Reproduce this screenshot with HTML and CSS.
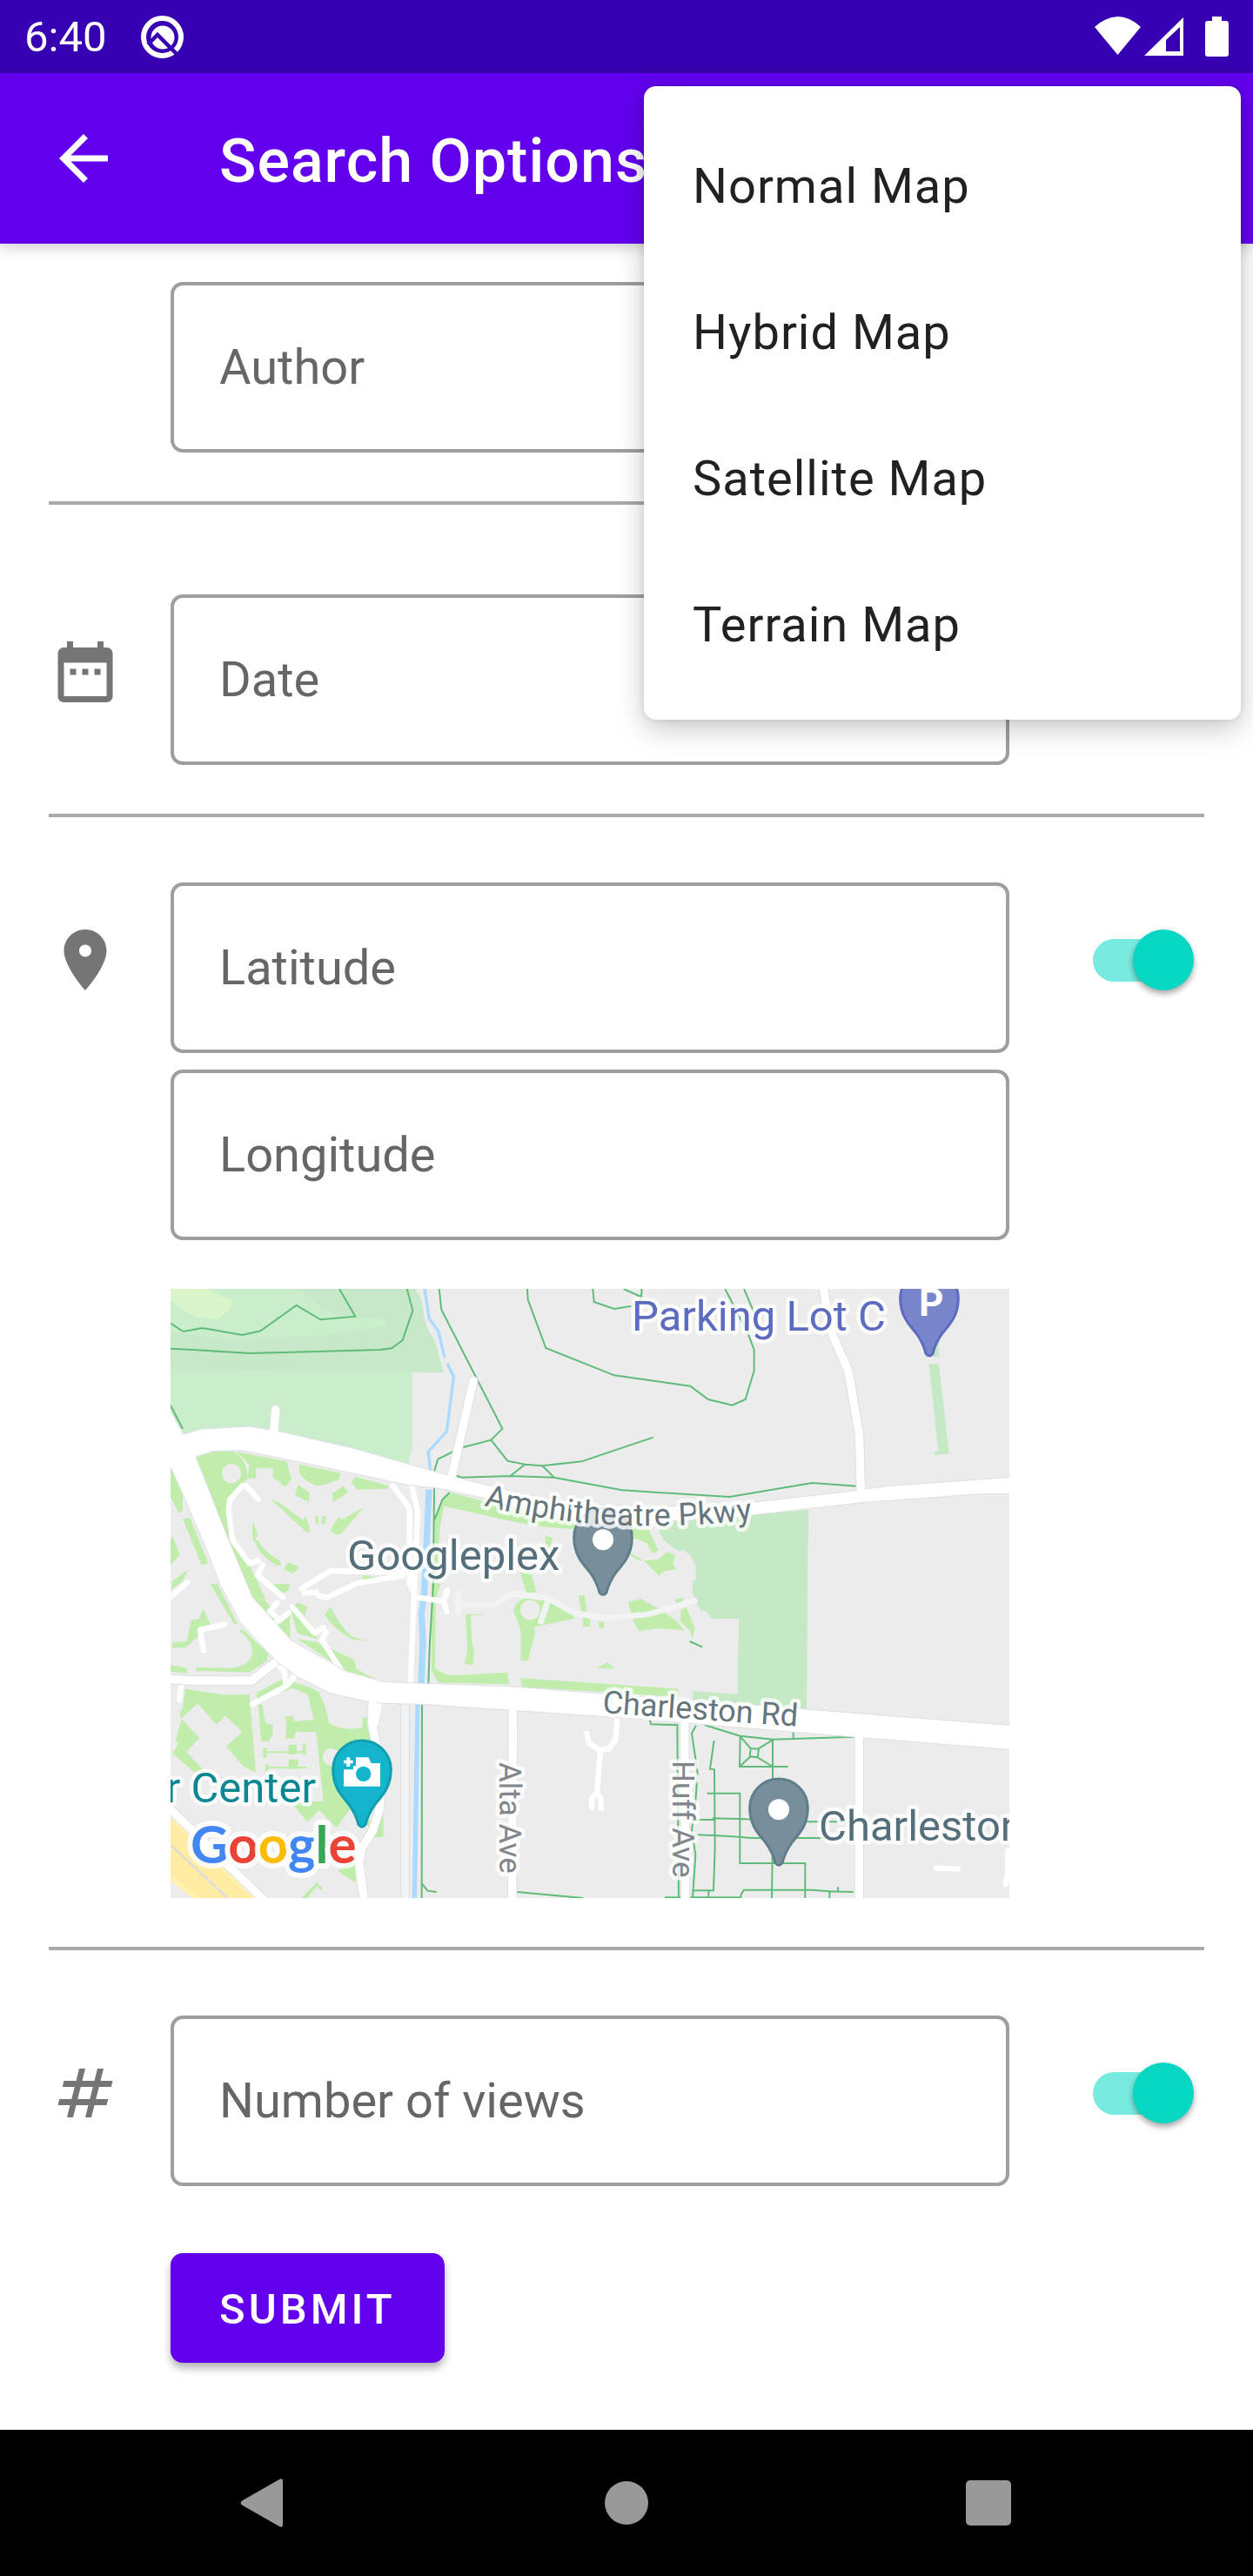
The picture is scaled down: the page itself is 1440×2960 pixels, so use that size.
FILE: index.html
```html
<!DOCTYPE html>
<html lang="en">
<head>
<meta charset="utf-8">
<meta name="viewport" content="width=device-width, initial-scale=1">
<title>Search Options</title>
<link rel="stylesheet" href="styles.css">
</head>
<body>
<div class="status-bar">
  <span class="status-time">6:40</span>
  <svg class="status-q" viewBox="0 0 49 49" aria-hidden="true">
    <circle cx="24.500" cy="24.500" r="21.500" fill="none" stroke="#fff" stroke-width="6"/>
    <circle cx="25" cy="25" r="13.500" fill="#fff"/>
    <path d="M8 33L19 22L45 48" fill="none" stroke="#3700b3" stroke-width="4.500"/>
  </svg>
  <svg class="status-icons" viewBox="0 0 154 46" aria-hidden="true" fill="#fff">
    <path d="M0 12Q27 -12 53 12L26.500 44Z"/>
    <path d="M102 1V45H57ZM98 12L82 27V40H98Z" fill-rule="evenodd"/>
    <path d="M135 0H146V5H151Q154 5 154 8V43Q154 46 151 46H130Q127 46 127 43V8Q127 5 130 5H135Z"/>
  </svg>
</div>

<header class="app-bar">
  <button class="icon-button" type="button" aria-label="Back">
    <svg viewBox="0 0 24 24" aria-hidden="true"><path fill="#fff" d="M20 11H7.830l5.590-5.590L12 4l-8 8 8 8 1.410-1.410L7.830 13H20v-2z"/></svg>
  </button>
  <h1 class="title">Search Options</h1>
</header>

<div class="menu" role="menu">
  <button class="menu-item" type="button" role="menuitem">Normal Map</button>
  <button class="menu-item" type="button" role="menuitem">Hybrid Map</button>
  <button class="menu-item" type="button" role="menuitem">Satellite Map</button>
  <button class="menu-item" type="button" role="menuitem">Terrain Map</button>
</div>

<form class="options">
  <section class="row row-author">
    <div class="stack">
      <div class="field"><label for="author">Author</label><input id="author" type="text"></div>
    </div>
  </section>

  <section class="row row-date">
    <svg class="row-icon" viewBox="0 0 24 24" aria-hidden="true"><path d="M9 11H7v2h2v-2zm4 0h-2v2h2v-2zm4 0h-2v2h2v-2zm2-7h-1V2h-2v2H8V2H6v2H5c-1.110 0-1.990.9-1.990 2L3 20c0 1.100.89 2 2 2h14c1.100 0 2-.9 2-2V6c0-1.100-.9-2-2-2zm0 16H5V9h14v11z"/></svg>
    <div class="stack">
      <div class="field"><label for="date">Date</label><input id="date" type="text"></div>
    </div>
  </section>

  <section class="row">
    <svg class="row-icon" viewBox="0 0 24 24" aria-hidden="true"><path d="M12 2C8.130 2 5 5.130 5 9c0 5.250 7 13 7 13s7-7.750 7-13c0-3.870-3.130-7-7-7zm0 9c-1.100 0-2-.9-2-2s.9-2 2-2 2 .9 2 2-.9 2-2 2z"/></svg>
    <div class="stack">
      <div class="field"><label for="lat">Latitude</label><input id="lat" type="text"></div>
      <div class="field"><label for="lng">Longitude</label><input id="lng" type="text"></div>
      <svg class="map" viewBox="0 0 964 700" role="img" aria-label="Map of the Googleplex">
        <rect width="964" height="700" fill="#ececec"/>
        <g transform="translate(-6 -11) scale(.33333)">
          <!-- parks -->
          <path fill="#caeecb" d="M18 300H852V570L835 645L440 560L18 560Z"/>
          <path fill="#c8e9c9" d="M18 33H862Q890 70 892 130Q900 170 925 205Q942 240 944 270L960 322L18 312Z"/>
          <path fill="#caeecb" d="M18 33H440Q500 60 530 90Q560 120 640 130Q760 130 760 150Q755 170 650 178Q560 195 400 200Q270 215 240 212L18 180Z"/>
          <path fill="#dbf5cb" d="M18 33H145L205 65L232 72L222 105L180 137L100 130L18 75Z"/>
          <path fill="#c5e8c5" d="M1700 840L2217 795L2211 1482L1818 1450V1420L1973 1430L1977 1170H1883L1865 1145L1845 1142L1818 1080V1038H1830L1828 990L1810 950L1785 932L1770 938L1720 900L1702 870ZM2632 292H2667L2702 600L2652 607V595L2665 592ZM2626 268H2668L2665 190L2630 230Z"/>
          <!-- campus lawns -->
          <g fill="#c0edab">
            <path d="M105 615L165 594L232 592Q285 620 283 690L262 705L222 755L212 810L225 905L290 985L345 1100L290 1090Z"/>
            <path d="M245 594L418 628L434 688L415 716L372 684V652H313V686H283L290 640ZM462 638L605 668L598 690Q540 715 520 710Q475 695 462 665ZM655 680L770 712L765 722L660 725L643 700ZM458 708L497 735L495 768L447 745ZM576 738L615 712L630 735L578 768Z"/>
            <path d="M362 757L390 768L475 830L485 815L500 868L488 873ZM685 785L605 878L585 880L568 865L598 820L610 828ZM517 818L528 815L530 845L517 840ZM540 818L554 815L552 840L540 845ZM302 835L318 880L305 912L300 880ZM308 898L320 900Q340 940 395 970L400 985L385 988Q320 950 308 898ZM425 975L462 992L440 1015L408 998Z"/>
            <path d="M18 645L60 740V800L45 803L18 750ZM60 825L85 822L148 980L125 985ZM25 885L50 950L18 985V900ZM25 1040L80 1000L60 1040L20 1070ZM155 1050H180L250 1190L235 1185ZM265 1205L355 1290L350 1315L290 1355L105 1350V1338L230 1340Q300 1330 300 1280Q298 1240 255 1215ZM18 1330L75 1340V1358L18 1352ZM88 1175L115 1172L130 1135L155 1190L120 1225L70 1270H25V1252L75 1248Z"/>
            <path d="M300 1050L400 1180L430 1160V1240L360 1200L290 1090ZM370 1050H430L425 1070L405 1085ZM455 1240L520 1250L650 1310L660 1345L730 1380L620 1350ZM548 1155L570 1130Q600 1190 640 1230L700 1250L640 1240Q575 1200 548 1155ZM430 1130L460 1115L490 1130L480 1160L525 1220L520 1240L455 1220ZM680 1020L780 1035L740 1045L680 1035Z"/>
            <path d="M68 1412L200 1432H290L312 1700L270 1680L210 1610L265 1560L208 1505L175 1535L112 1462L55 1515L118 1580L72 1630L130 1690L100 1700L25 1635L45 1600L35 1590L55 1520Q45 1490 60 1480Z"/>
            <path d="M315 1425L400 1380L420 1385Q500 1400 530 1425L550 1470L565 1530Q600 1550 640 1550L680 1545V1510L695 1512L710 1590L720 1650L690 1880L650 1810L590 1890L530 1830L490 1870L430 1800H545L520 1560L450 1560L445 1580L415 1585L418 1520L408 1508L440 1505L445 1525L512 1518L490 1430L440 1410L315 1450Z"/>
            <path d="M320 1465L335 1468L345 1530L370 1535V1570L355 1595L330 1590ZM337 1615H350V1650H337ZM425 1605H453V1637H425ZM474 1600H485V1640H474ZM345 1672H355V1700H345ZM425 1655H458V1688H425ZM345 1627H485V1633H345ZM345 1680H490V1686H345Z"/>
            <path d="M595 2040L655 1990V2080ZM690 1870L752 1850V1923H720ZM470 2133L522 2078L542 2100L538 2108L522 2092L490 2133Z"/>
            <path d="M950 770Q960 740 985 736L1100 765L1420 830V862L1320 855L1220 840L960 782L945 870L940 1050H930V830ZM1222 1005L1260 1010L1280 1080H1245ZM1310 885L1335 890L1325 930L1310 925ZM918 1050H950L932 1100L930 1340Q960 1365 1000 1365L1180 1355L1185 1396L940 1390L918 1350ZM1035 1155H1105L1052 1160L1058 1250L1065 1290L1060 1330L1030 1325L1042 1280Z"/>
            <path d="M1210 1120Q1230 1090 1300 1095L1410 1150V1170L1310 1190L1270 1200L1275 1220L1250 1315H1225V1210L1200 1140ZM1225 1375L1768 1412V1440L1230 1405ZM1425 1090H1445L1460 1190L1445 1200Z"/>
            <path d="M1595 1112L1640 1102L1700 1135L1760 1175L1788 1210L1700 1203L1632 1213L1615 1180ZM1778 1140L1795 1130L1825 1200L1818 1243L1808 1210L1775 1180ZM1758 1102L1785 1098V1112L1760 1118ZM1485 1340L1525 1320L1550 1342ZM1440 1170H1465V1198H1440ZM1495 1180H1512V1204H1495ZM1610 850L1665 860L1700 935L1680 945L1660 910L1612 890ZM1650 970L1700 965L1730 940L1758 950L1750 980L1762 1000L1720 1005L1702 1022ZM1600 942L1644 966L1640 973L1600 950Z"/>
          </g>
          <g fill="#ececec"><circle cx="228" cy="670" r="33"/><circle cx="1258" cy="1140" r="34"/><circle cx="572" cy="1647" r="30"/></g>
          <!-- freeway -->
          <path fill="#ffeba1" d="M18 1840L320 2133H105L18 2065Z"/>
          <path d="M18 1850L310 2133" stroke="#fff2af" stroke-width="22"/>
          <path d="M18 2062L108 2133" stroke="#fff2af" stroke-width="18"/>
          <path d="M18 1950L215 2133" stroke="#dcdcdc" stroke-width="8"/>
          <!-- creek -->
          <g fill="none" stroke="#aadaff">
            <path stroke-width="10" d="M894 33L910 135L942 180L963 270M972 290L994 335L990 370L970 525L906 595L915 665"/>
            <path stroke-width="22" d="M909 725L893 1080L883 1150L888 1250L882 1395"/>
            <path stroke-width="16" d="M870 1460L859 2133"/>
          </g>
          <!-- trails -->
          <g class="trail">
            <path d="M18 152L62 180L128 168L265 192L328 178L452 90L535 139L655 128L600 33M18 239L110 244L290 255L495 250L740 243L780 238L818 210L853 108L833 33M18 435L60 515"/>
            <path d="M944 33L952 105L1162 515L1123 554L1015 582L940 620L926 665M1123 554L1180 626L1240 638L1300 643L1435 628L1682 545M1240 638L1190 677M1300 643L1340 683M1000 675L1020 683L1190 678L1340 683L1575 727L1945 750L2230 702L2385 713"/>
            <path d="M1248 33L1250 70L1312 237L1548 331L1810 368L1872 414L1955 434L2000 414L2030 315V243L2010 190L1930 33M1995 33L2030 115M1474 33L1478 78L1548 102L1610 92L1640 70L1643 33M1580 33L1640 60"/>
            <path d="M927 720L924 1050L912 1250L907 1395M980 735L955 760L928 830M885 1460L884 2133M884 2083L905 2108L935 2112M1213 2112L1440 2133M1808 1248L1852 1268"/>
            <path d="M1670 1520L1675 1534L1765 1536L1770 2133M1830 1538L1815 1565L1835 1700L1828 1800L1815 1900L1828 1985L1818 2133M1860 1537L1982 1574L2095 1586L2378 1577M2165 1550V1586M1982 1574L1980 1680H2147M2094 1586V1790M2018 1617L2046 1619L2042 1648L2015 1645ZM1982 1576L2018 1617M2094 1588L2045 1618M1980 1680L2015 1647M2094 1680L2042 1648"/>
            <path d="M1892 1590L1878 1688L1893 1690L1895 1960L1890 2107H1818M1868 1772H1981V2013H2206V2133M1825 1863H1890V1858L2050 1862M1820 1915L1890 1917L1980 1922L2020 1926H2280M2190 1870H2350M2093 1990L2091 2133M1722 2131H1984L1985 2120L1995 2105H2230L2290 2110L2372 2112M2319 2095V2112M2290 2110V2133M1873 2107V2133"/>
          </g>
          <!-- service lanes -->
          <path d="M827 1460V2133" fill="none" stroke="#dfe0e6" stroke-width="32"/>
          <path d="M827 1460V2133" fill="none" stroke="#f1f3f4" stroke-width="26"/>
          <path class="lane" d="M1010 1085V1150M1010 1122H1135L1195 1082L1320 1100L1405 1148L1510 1168L1665 1155L1825 1108M1320 1105L1295 1180"/>
          <path class="road r18" d="M320 758L278 712H265L222 760L218 800L232 900L290 980L320 970M335 985L318 1020L405 1095M785 712L842 790V1050L855 1075M850 712L870 800L858 1080L845 1390M470 1065L570 1005L830 1010M480 1082L520 1078M530 1090L555 1098L660 1048L820 1022M18 1095L75 1045M870 1097L960 1110L972 1072M960 1110L970 1145M205 1190L120 1208L132 1280M438 1130L515 1220L545 1200M555 1215L540 1245L615 1360M385 1115L360 1145L395 1175L425 1150M395 1175L365 1190M455 1355L420 1400L300 1465M390 1330L410 1350L415 1400M55 1395L48 1450M1558 1505L1553 1585L1530 1618L1500 1623L1460 1600L1453 1565M1500 1623L1488 1770M1470 1820V1790L1488 1770L1502 1790V1825M2658 2030L2732 2032M2905 1970V2050L2897 2085"/>
          <!-- streets, edge then surface -->
          <g id="streets">
            <g class="edge">
              <path d="M380 450L374 530M1062 350L985 690M2268 20L2280 100L2300 190L2355 315L2393 540L2398 730M715 1450L712 1530L730 1620L745 1720L740 1820L715 1900L678 1960L668 2010L685 2140"/>
              <path d="M1198 1480L1196 2140M1790 1520L1793 2140M2392 1570V2140M10 1378L90 1383H298L385 1315M10 1820L350 2150"/>
            </g>
            <g class="road r28">
              <path d="M380 450L374 530M1062 350L985 690M2268 20L2280 100L2300 190L2355 315L2393 540L2398 730M715 1450L712 1530L730 1620L745 1720L740 1820L715 1900L678 1960L668 2010L685 2140M735 1450L720 1530"/>
              <path d="M1198 1480L1196 2140M1790 1520L1793 2140M2392 1570V2140M10 1378L90 1383H298L385 1315M10 1820L350 2150"/>
            </g>
          </g>
          <g fill="#fff" stroke="#dedfe5" stroke-width="3">
            <path d="M10 440L62 535L125 516L290 507L388 523L650 583L920 660L1000 682L1120 712L1250 745L1500 778L1700 785L2030 768L2340 733L2485 713L2920 682V740H2810L2400 770L2030 812L1750 832L1500 825L1300 800L1100 755L950 722L840 710L440 625L265 590L165 592L105 612L215 890L300 1095L435 1245L620 1350L755 1388L1185 1403L1440 1423L2210 1482L2920 1538V1622L2300 1572L1620 1515L1180 1485L885 1465L745 1462L690 1455L565 1425L455 1370L395 1325L372 1305L260 1185L188 1050L150 950L60 740L10 630Z"/>
          </g>
          <g fill="none" stroke="#fff" stroke-width="26"><path d="M375 500L373 540M990 660L983 700M2398 715V745M1198 1470V1500M1790 1500V1540M2392 1560V1590M715 1445V1475"/></g>
          <!-- pins -->
          <g stroke-width="9">
            <g fill="#788f9b" stroke="#607d8b">
              <path transform="translate(1509 890)" d="M0-100A100 100 0 0 1 100 0C100 60 70 90 45 120C25 148 18 165 12 190Q0 205-12 190C-18 165-25 148-45 120C-70 90-100 60-100 0A100 100 0 0 1 0-100Z"/>
              <path transform="translate(2115 1822)" d="M0-100A100 100 0 0 1 100 0C100 60 70 90 45 120C25 148 18 165 12 190Q0 205-12 190C-18 165-25 148-45 120C-70 90-100 60-100 0A100 100 0 0 1 0-100Z"/>
            </g>
            <path fill="#14b4cd" stroke="#129eaf" transform="translate(678 1690)" d="M0-100A100 100 0 0 1 100 0C100 60 70 90 45 120C25 148 18 165 12 190Q0 205-12 190C-18 165-25 148-45 120C-70 90-100 60-100 0A100 100 0 0 1 0-100Z"/>
            <path fill="#7985cb" stroke="#5c6bc0" transform="translate(2634 66)" d="M0-100A100 100 0 0 1 100 0C100 60 70 90 45 120C25 148 18 165 12 190Q0 205-12 190C-18 165-25 148-45 120C-70 90-100 60-100 0A100 100 0 0 1 0-100Z"/>
          </g>
          <g fill="#fff"><circle cx="1509" cy="898" r="36"/><circle cx="2115" cy="1828" r="36"/>
            <path d="M615 1690H648V1678H657V1648H700L710 1668H741V1748H615ZM625 1648H637V1658H647V1669H637V1680H625V1669H615V1658H625Z"/>
          </g>
          <circle cx="683" cy="1705" r="26" fill="#14b4cd"/>
        </g>
        <g class="place">
          <text x="203" y="323" fill="#546e7a">Googleplex</text>
          <text x="530" y="48" fill="#5c6bc0">Parking Lot C</text>
          <text x="167" y="590" text-anchor="end" fill="#0b8793">r Center</text>
          <text x="745" y="634" fill="#546e7a">Charleston</text>
        </g>
        <path id="amphi" d="M360 249Q500 286 680 264" fill="none"/>
        <g class="street">
          <text><textPath href="#amphi">Amphitheatre Pkwy</textPath></text>
          <text transform="translate(496 487) rotate(4)">Charleston Rd</text>
          <text class="minor" transform="translate(378 544) rotate(90)">Alta Ave</text>
          <text class="minor" transform="translate(577 542) rotate(90)">Huff Ave</text>
        </g>
        <text class="pin-letter" x="860" y="31">P</text>
        <text class="brand" x="23" y="660"><tspan fill="#4285f4">G</tspan><tspan fill="#ea4335">o</tspan><tspan fill="#fbbc05">o</tspan><tspan fill="#4285f4">g</tspan><tspan fill="#34a853">l</tspan><tspan fill="#ea4335">e</tspan></text>
      </svg>
    </div>
    <input class="switch" type="checkbox" role="switch" aria-label="Filter by location" checked>
  </section>

  <section class="row row-last">
    <svg class="row-icon" viewBox="0 0 24 24" aria-hidden="true"><path d="M20.500 10L21 8h-4l1-4h-2l-1 4h-4l1-4h-2L9 8H5l-.5 2h4l-1 4h-4L3 16h4l-1 4h2l1-4h4l-1 4h2l1-4h4l.5-2h-4l1-4h4zm-7 4h-4l1-4h4l-1 4z"/></svg>
    <div class="stack">
      <div class="field"><label for="views">Number of views</label><input id="views" type="text"></div>
      <button class="submit" type="submit">SUBMIT</button>
    </div>
    <input class="switch" type="checkbox" role="switch" aria-label="Filter by number of views" checked>
  </section>
</form>

<nav class="nav-bar" aria-label="System navigation">
  <button type="button" aria-label="Back"><svg viewBox="0 0 56 56" aria-hidden="true"><path d="M3 25L45 1Q49 -1 49 3V53Q49 57 45 55L3 31Q-2 28 3 25Z"/></svg></button>
  <button type="button" aria-label="Home"><svg viewBox="0 0 56 56" aria-hidden="true"><circle cx="28" cy="28" r="25"/></svg></button>
  <button type="button" aria-label="Recent apps"><svg viewBox="0 0 56 56" aria-hidden="true"><rect x="2" y="2" width="52" height="52" rx="5"/></svg></button>
</nav>
</body>
</html>
```
FILE: styles.css
```css
* { box-sizing: border-box; }

body {
  margin: 0;
  position: relative;
  min-height: 100vh;
  display: flex;
  flex-direction: column;
  background: #fff;
  font-family: Roboto, "Noto Sans", sans-serif;
}

button, input {
  margin: 0;
  padding: 0;
  border: 0;
  background: none;
  font: inherit;
}

svg { display: block; }

/* Status bar */
.status-bar {
  display: flex;
  align-items: center;
  height: 84px;
  padding: 0 28px;
  background: #3700b3;
  color: #fff;
}
.status-time { font-size: 49px; line-height: 84px; padding-top: 2px; }
.status-q { width: 49px; height: 49px; margin-left: 40px; }
.status-icons { width: 154px; height: 46px; margin-left: auto; }

/* App bar */
.app-bar {
  position: relative;
  display: flex;
  align-items: center;
  gap: 114px;
  height: 196px;
  padding: 0 54px;
  background: #6200ee;
  color: #fff;
  box-shadow: 0 4px 16px rgba(0, 0, 0, .2);
}
.icon-button svg { width: 84px; height: 84px; }
.title {
  margin: 0;
  padding-top: 6px;
  font-size: 70px;
  font-weight: 500;
  line-height: 96px;
  letter-spacing: 1px;
  white-space: nowrap;
}

/* Overflow menu */
.menu {
  position: absolute;
  z-index: 2;
  top: 99px;
  right: 14px;
  width: 686px;
  padding: 28px 0;
  display: flex;
  flex-direction: column;
  border-radius: 14px;
  background: #fff;
  box-shadow: 0 10px 32px rgba(0, 0, 0, .22), 0 0 8px rgba(0, 0, 0, .1);
}
.menu-item {
  height: 168px;
  padding: 6px 56px 0;
  text-align: left;
  font-size: 56px;
  letter-spacing: 1px;
  color: #212121;
}

/* Form rows */
.options { padding: 0 56px; flex: 1; }
.row {
  display: grid;
  grid-template-columns: 84px minmax(0, 1fr) 168px;
  column-gap: 56px;
  align-items: start;
  padding: 75px 0 56px;
  border-bottom: 4px solid #a9a9a9;
}
.row-author { padding-top: 44px; }
.row-date { padding-top: 103px; }
.row-last { border-bottom: 0; padding-bottom: 77px; }
.row-icon { width: 84px; height: 84px; margin-top: 47px; fill: #757575; }
.stack { grid-column: 2; display: flex; flex-direction: column; }

.field { display: grid; height: 196px; }
.field + .field { margin-top: 19px; }
.field label, .field input { grid-area: 1 / 1; }
.field label {
  align-self: center;
  padding: 0 56px;
  font-size: 56px;
  line-height: 64px;
  color: #666;
}
.field input {
  width: 100%;
  height: 100%;
  padding: 0 52px;
  border: 4px solid #9e9e9e;
  border-radius: 14px;
  font-size: 56px;
}

.switch {
  grid-column: 3;
  justify-self: end;
  appearance: none;
  display: grid;
  align-items: center;
  width: 116px;
  height: 84px;
  margin: 47px 12px 0 0;
}
.switch::before, .switch::after { content: ""; grid-area: 1 / 1; }
.switch::before {
  width: 112px;
  height: 49px;
  border-radius: 25px;
  background: #78ebe0;
}
.switch::after {
  justify-self: end;
  width: 70px;
  height: 70px;
  border-radius: 50%;
  background: #05d7c3;
  box-shadow: 0 4px 7px rgba(0, 0, 0, .35);
}

.submit {
  align-self: flex-start;
  height: 126px;
  margin-top: 77px;
  padding: 2px 56px 0;
  border-radius: 14px;
  background: #6200ee;
  color: #fff;
  font-size: 49px;
  font-weight: 500;
  letter-spacing: 4px;
  box-shadow: 0 6px 10px rgba(0, 0, 0, .3);
}

/* Map */
.map { width: 100%; height: auto; margin-top: 56px; }
.trail { fill: none; stroke: #5fbb79; stroke-width: 6; }
.road { fill: none; stroke: #fff; stroke-linecap: round; stroke-linejoin: round; }
.r18 { stroke-width: 19; }
.r28 { stroke-width: 28; }
.edge { fill: none; stroke: #dedfe5; stroke-width: 34; stroke-linecap: round; stroke-linejoin: round; }
.lane { fill: none; stroke: #f1f3f4; stroke-width: 20; stroke-linecap: round; stroke-linejoin: round; }
.map text { paint-order: stroke; stroke: rgba(255, 255, 255, .8); stroke-width: 9px; stroke-linejoin: round; }
.place text { font-size: 49px; }
.street text { font-size: 36px; fill: #66757b; }
.street .minor { font-size: 35px; fill: #80868b; }
.map .pin-letter { font-size: 44px; font-weight: 700; fill: #fff; stroke: none; }
.map .brand { font-family: Lato, sans-serif; font-size: 60px; font-weight: 700; stroke-width: 12px; }

/* System navigation */
.nav-bar {
  display: flex;
  justify-content: space-around;
  align-items: center;
  height: 168px;
  padding: 0 96px;
  background: #000;
}
.nav-bar svg { width: 56px; height: 56px; fill: #999; }
```
